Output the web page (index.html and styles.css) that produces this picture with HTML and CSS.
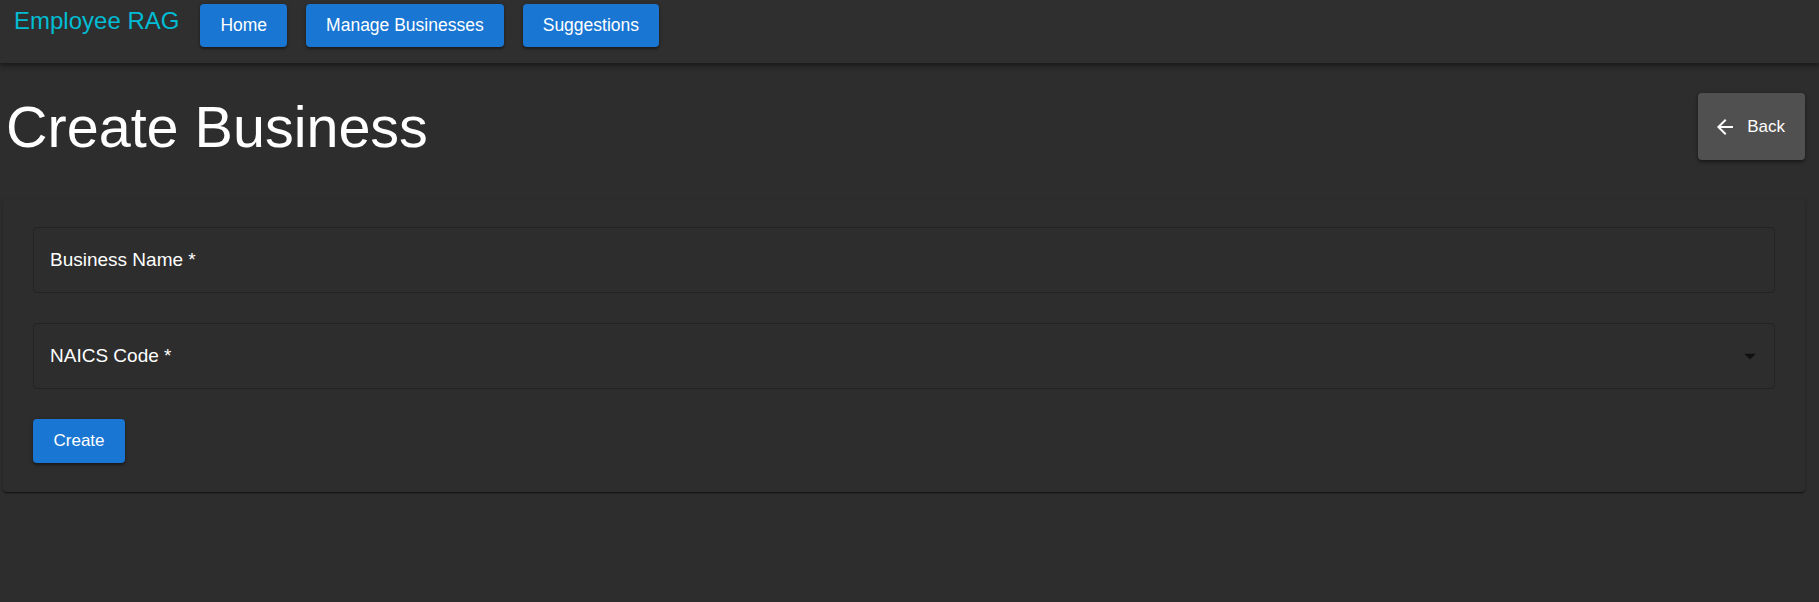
FILE: index.html
```html
<!DOCTYPE html>
<html lang="en">
<head>
<meta charset="utf-8">
<title>Create Business</title>
<link rel="stylesheet" href="styles.css">
</head>
<body>
<header class="appbar">
  <div class="brand">Employee RAG</div>
  <nav class="nav">
    <button class="nav-btn">Home</button>
    <button class="nav-btn">Manage Businesses</button>
    <button class="nav-btn">Suggestions</button>
  </nav>
</header>
<main class="main">
  <div class="title-row">
    <h1 class="page-title">Create Business</h1>
    <button class="back-btn">
      <svg class="back-icon" viewBox="0 0 24 24" width="24" height="24"><path d="M20 11H7.83l5.59-5.59L12 4l-8 8 8 8 1.41-1.41L7.83 13H20v-2z" fill="currentColor"/></svg>
      <span>Back</span>
    </button>
  </div>
  <section class="card">
    <div class="field"><span class="field-label">Business Name *</span></div>
    <div class="field select"><span class="field-label">NAICS Code *</span>
      <svg class="dd-icon" viewBox="0 0 24 24" width="28" height="28"><path d="M7 10l5 5 5-5z" fill="currentColor"/></svg>
    </div>
    <div class="actions"><button class="create-btn">Create</button></div>
  </section>
</main>
</body>
</html>
```
FILE: styles.css
```css
* { box-sizing: border-box; }
html, body { margin: 0; padding: 0; }
body {
  background: #2d2d2d;
  color: #fff;
  font-family: "Liberation Sans", Arial, sans-serif;
  width: 1819px;
  height: 602px;
  overflow: hidden;
}
.appbar {
  height: 63px;
  background: #2f2f2f;
  display: flex;
  align-items: flex-start;
  padding: 4px 0 0 14px;
  box-shadow: 0 2px 4px rgba(0,0,0,0.35), 0 4px 6px rgba(0,0,0,0.15);
  position: relative;
  z-index: 1;
}
.brand {
  font-size: 24px;
  color: #00bcd4;
  line-height: 24px;
  padding-top: 5px;
  margin-right: 21px;
}
.nav { display: flex; gap: 19px; }
.nav-btn {
  font-family: "Liberation Sans", Arial, sans-serif;
  font-size: 17.5px;
  color: #fff;
  background: #1976d2;
  border: 0;
  border-radius: 4px;
  height: 43px;
  padding: 0 20px;
  box-shadow: 0 2px 2px rgba(0,0,0,0.3), 0 1px 4px rgba(0,0,0,0.2);
}
.main { padding: 0 14px 0 3px; }
.title-row {
  display: flex;
  align-items: center;
  justify-content: space-between;
  height: 127px;
  margin-bottom: 9px;
}
.page-title {
  margin: 0 0 0 3px;
  font-size: 57.5px;
  font-weight: 400;
  line-height: 66px;
  color: #fff;
}
.back-btn {
  display: flex;
  align-items: center;
  gap: 10px;
  height: 67px;
  padding: 0 20px 0 15px;
  background: #505050;
  color: #fff;
  border: 0;
  border-radius: 4px;
  font-family: "Liberation Sans", Arial, sans-serif;
  font-size: 17px;
  box-shadow: 0 2px 3px rgba(0,0,0,0.35), 0 1px 5px rgba(0,0,0,0.2);
}
.back-icon { display: block; }
.card {
  background: #2d2d2d;
  border-radius: 4px;
  padding: 28px 30px 29px 30px;
  display: flex;
  flex-direction: column;
  gap: 30px;
  box-shadow: 0 2px 1px -1px rgba(0,0,0,0.3), 0 1px 1px 0 rgba(0,0,0,0.25), 0 1px 3px 0 rgba(0,0,0,0.2);
}
.field {
  height: 66px;
  border: 1px solid #232323;
  border-radius: 4px;
  display: flex;
  align-items: center;
  padding: 0 16px;
  justify-content: space-between;
}
.field-label { font-size: 19px; color: #fff; }
.dd-icon { color: #111; margin-right: -6px; }
.actions { display: flex; }
.create-btn {
  width: 92px;
  height: 44px;
  background: #1976d2;
  color: #fff;
  border: 0;
  border-radius: 4px;
  font-family: "Liberation Sans", Arial, sans-serif;
  font-size: 17px;
  box-shadow: 0 2px 2px rgba(0,0,0,0.3), 0 1px 4px rgba(0,0,0,0.2);
}
```
